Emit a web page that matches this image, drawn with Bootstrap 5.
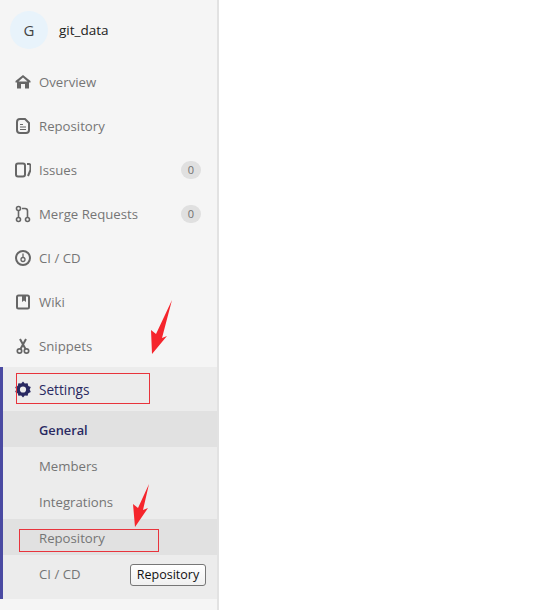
<!DOCTYPE html>
<html lang="en">
<head>
    <meta charset="UTF-8">
    <title>git_data</title>
    <link href="https://cdn.jsdelivr.net/npm/bootstrap@5.3.0/dist/css/bootstrap.min.css" rel="stylesheet">
    <style>
        body { background: #fff; font-family: "Open Sans", "Noto Sans", sans-serif; font-size: 13.2px; color: #757575; height: 610px; overflow: hidden; }
        .side { width: 219px; height: 610px; background: #f5f5f5; border-right: 2px solid #e2e2e2; padding-top: 8px; }
        .head-row { height: 44px; padding-left: 10px; gap: 11px; margin-bottom: 8px; }
        .avatar-g { width: 38px; height: 38px; border-radius: 50%; background: #e8f3fb; color: #444; font-size: 15px; }
        .proj { color: #222; font-size: 13.5px; }
        .item-row { height: 44px; padding-left: 15px; padding-right: 16px; gap: 8px; }
        .item-row svg { width: 16px; height: 18px; flex: none; }
        .item-lbl { padding-top: 2px; }
        .short-row { height: 43px; }
        .cnt { width: 20px; height: 18px; border-radius: 9px; background: #e0e0e0; color: #707070; font-size: 11px; }
        .sect { background: #ececec; border-left: 3px solid #4a4aa2; height: 232px; }
        .sect .item-row { padding-left: 12px; }
        .sub-row { height: 36px; padding-left: 36px; padding-top: 3px; }
        .sub-on { background: #e1e1e1; }
        .txt-act { color: #292961; font-weight: 500; font-size: 13.6px; padding-top: 2px; }
        .sub-first { height: 36px; padding-left: 36px; padding-top: 3px; background: #e1e1e1; color: #292961; font-weight: 600; font-size: 12.8px; }
        .mark-box { position: absolute; border: 1px solid #e8343c; }
        .box-a { left: 16px; top: 373px; width: 134px; height: 31px; }
        .box-b { left: 19px; top: 529px; width: 140px; height: 23px; }
        .tip-box { position: absolute; left: 130px; top: 564px; width: 76px; height: 22px; background: linear-gradient(#fff, #f0f0f0); border: 1px solid #767676; border-radius: 3px; color: #111; font-size: 12.5px; }
        .arrow-svg { position: absolute; }
        .arrow-a { left: 148px; top: 298px; width: 26px; height: 58px; }
        .arrow-b { left: 132px; top: 482px; width: 20px; height: 46px; }
    </style>
</head>
<body class="position-relative">
    <div class="side d-flex flex-column">
        <div class="head-row d-flex align-items-center">
            <div class="avatar-g d-flex align-items-center justify-content-center">G</div>
            <div class="proj">git_data</div>
        </div>

        <div class="item-row d-flex align-items-center">
            <svg viewBox="0 0 16 18"><path d="M8 2 L15.5 8 V9.5 H14 V15.5 H10 V11 H6 V15.5 H2 V9.5 H.5 V8 Z M3.5 8.5 H12.5 L8 4.6 Z" fill="#666" fill-rule="evenodd"/></svg>
            <span class="item-lbl">Overview</span>
        </div>
        <div class="item-row d-flex align-items-center">
            <svg viewBox="0 0 16 18"><path d="M5 2 H10 L14 6 V13 A3 3 0 0 1 11 16 H5 A3 3 0 0 1 2 13 V5 A3 3 0 0 1 5 2 Z" fill="none" stroke="#666" stroke-width="2"/><path d="M5 7.5 H8 M5 10 H11 M5 12.5 H11" stroke="#666" stroke-width="1.2"/></svg>
            <span class="item-lbl">Repository</span>
        </div>
        <div class="item-row d-flex align-items-center">
            <svg viewBox="0 0 16 18"><rect x="1" y="2.5" width="9" height="13" rx="2" fill="none" stroke="#666" stroke-width="2"/><path d="M12 3 H14 A1.5 1.5 0 0 1 15.5 4.5 V9 L13 15" fill="none" stroke="#666" stroke-width="2"/></svg>
            <span class="item-lbl flex-grow-1">Issues</span>
            <span class="cnt d-flex align-items-center justify-content-center">0</span>
        </div>
        <div class="item-row d-flex align-items-center">
            <svg viewBox="0 0 16 18"><circle cx="3.5" cy="3.5" r="2" fill="none" stroke="#666" stroke-width="1.6"/><circle cx="3.5" cy="14.5" r="2" fill="none" stroke="#666" stroke-width="1.6"/><circle cx="12.5" cy="14.5" r="2" fill="none" stroke="#666" stroke-width="1.6"/><path d="M3.5 5.5 V12.5 M12.5 12.5 V6 A2.5 2.5 0 0 0 10 3.5 H7" fill="none" stroke="#666" stroke-width="1.6"/></svg>
            <span class="item-lbl flex-grow-1">Merge Requests</span>
            <span class="cnt d-flex align-items-center justify-content-center">0</span>
        </div>
        <div class="item-row d-flex align-items-center">
            <svg viewBox="0 0 16 18"><circle cx="8" cy="9" r="7" fill="none" stroke="#666" stroke-width="2"/><path d="M8 4.5 V8" stroke="#666" stroke-width="1.3"/><circle cx="8" cy="10.5" r="2" fill="none" stroke="#666" stroke-width="1.3"/></svg>
            <span class="item-lbl">CI / CD</span>
        </div>
        <div class="item-row d-flex align-items-center">
            <svg viewBox="0 0 16 18"><rect x="2" y="2.5" width="12" height="13" rx="1.5" fill="none" stroke="#666" stroke-width="2"/><path d="M7 3 H11 V9 L9 7.5 L7 9 Z" fill="#666"/></svg>
            <span class="item-lbl">Wiki</span>
        </div>
        <div class="item-row short-row d-flex align-items-center">
            <svg viewBox="0 0 16 18"><circle cx="4.5" cy="14" r="2.2" fill="none" stroke="#666" stroke-width="1.7"/><circle cx="11.5" cy="14" r="2.2" fill="none" stroke="#666" stroke-width="1.7"/><path d="M5.5 12 L11 2 M10.5 12 L5 2" stroke="#666" stroke-width="2"/></svg>
            <span class="item-lbl">Snippets</span>
        </div>

        <div class="sect">
            <div class="item-row d-flex align-items-center">
                <svg viewBox="0 0 16 18"><path d="M8 1.5 L9.8 3.6 L12.6 3.2 L13.3 5.9 L15.8 7.1 L14.7 9.6 L15.8 12 L13.3 13.2 L12.6 15.8 L9.8 15.4 L8 17.5 L6.2 15.4 L3.4 15.8 L2.7 13.2 L.2 12 L1.3 9.6 L.2 7.1 L2.7 5.9 L3.4 3.2 L6.2 3.6 Z M8 6.4 A3.1 3.1 0 1 0 8 12.6 A3.1 3.1 0 1 0 8 6.4 Z" fill="#292961" fill-rule="evenodd"/></svg>
                <span class="txt-act">Settings</span>
            </div>
            <div class="sub-first d-flex align-items-center">General</div>
            <div class="sub-row d-flex align-items-center">Members</div>
            <div class="sub-row d-flex align-items-center">Integrations</div>
            <div class="sub-row sub-on d-flex align-items-center">Repository</div>
            <div class="sub-row d-flex align-items-center">CI / CD</div>
        </div>
    </div>

    <!-- annotations on top of the screenshot -->
    <svg class="arrow-svg arrow-a" viewBox="0 0 26 58"><path d="M24 2 L14 40 L19 38 L4 56 L3 32 L8 36 Z" fill="#f5252c"/></svg>
    <svg class="arrow-svg arrow-b" viewBox="0 0 20 46"><path d="M17 2 L11 28 L16 26 L3 45 L1 22 L6 26 Z" fill="#f5252c"/></svg>
    <div class="mark-box box-a"></div>
    <div class="mark-box box-b"></div>
    <div class="tip-box d-flex align-items-center justify-content-center">Repository</div>

    <script src="https://cdn.jsdelivr.net/npm/bootstrap@5.3.0/dist/js/bootstrap.bundle.min.js"></script>
</body>
</html>
